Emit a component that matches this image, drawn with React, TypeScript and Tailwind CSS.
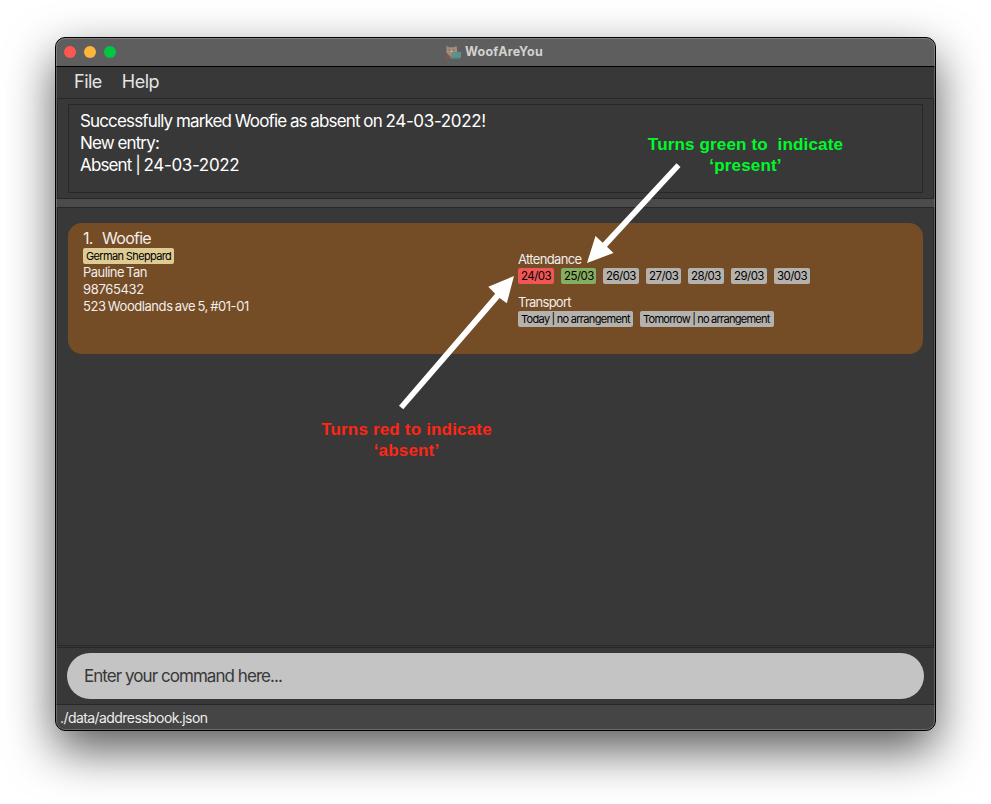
import React from "react";

const dates = [
  { label: "24/03", width: "w-9", color: "bg-[#f05654]" },
  { label: "25/03", width: "w-[35px]", color: "bg-[#86ae60]" },
  { label: "26/03", width: "w-9", color: "bg-[#b5b2ae]" },
  { label: "27/03", width: "w-[35px]", color: "bg-[#b5b2ae]" },
  { label: "28/03", width: "w-9", color: "bg-[#b5b2ae]" },
  { label: "29/03", width: "w-9", color: "bg-[#b5b2ae]" },
  { label: "30/03", width: "w-9", color: "bg-[#b5b2ae]" },
];

function CatIcon() {
  return (
    <svg width="17" height="15" viewBox="0 0 17 15" className="mr-[3px] shrink-0">
      <path d="M1.500 .8L4 2.200h5L11.500 .8l.8 5.500L10 9.500H3L1.300 7z" fill="#a58c78" />
      <path d="M3 7h7.500v6H3z" fill="#a58a74" />
      <path d="M3.800 4.500h1.200v1H3.800zM8 4.500h1.200v1H8z" fill="#5d524c" />
      <path d="M5.300 5.800h2.200V7H5.300z" fill="#c9b7a6" />
      <path d="M.5 11l3-1.500L6 12v1.500H1.500z" fill="#8c5151" />
      <path d="M6.500 7.500L16 6.800v5.700L14.500 13.500h-8z" fill="#5c918c" />
      <path d="M5 12.300h10V13.500H5z" fill="#4f8580" />
    </svg>
  );
}

function TitleBar() {
  return (
    <div className="relative flex h-[29px] shrink-0 items-center justify-center border-b border-black bg-[#5e5e5e] pr-[3px]">
      <div className="absolute left-2 top-2 flex gap-2">
        <span className="size-3 rounded-full bg-[#ff5650]" />
        <span className="size-3 rounded-full bg-[#ffb43a]" />
        <span className="size-3 rounded-full bg-[#00c742]" />
      </div>
      <CatIcon />
      <span className="text-[12.5px] font-bold leading-none tracking-[0.25px] text-[#d2d2d2]">WoofAreYou</span>
    </div>
  );
}

function Card() {
  return (
    <div className="flex h-[131px] rounded-[14px] bg-[#744c26] text-[#f2eeea]">
      <div className="flex w-[450px] flex-col items-start pl-[15px] pt-[6px]">
        <div className="h-[19px] whitespace-pre text-[16px] leading-[18px] tracking-[-0.75px] [word-spacing:1px]">1.  Woofie</div>
        <div className="h-4 w-[91px] whitespace-nowrap rounded-[2px] bg-[#dfcb94] pl-[3px] text-[11px] leading-4 tracking-[-0.64px] text-black">
          German Sheppard
        </div>
        <div className="text-[13px] leading-[17px] tracking-[-0.55px] [word-spacing:-1px]">Pauline Tan</div>
        <div className="text-[13px] leading-[17px] tracking-[-0.35px]">98765432</div>
        <div className="text-[13px] leading-[17px] tracking-[-0.43px] [word-spacing:-1px]">523 Woodlands ave 5, #01-01</div>
      </div>
      <div className="flex flex-col pt-7">
        <div className="text-[13px] leading-[17px] tracking-[-0.65px]">Attendance</div>
        <div className="flex gap-[7px]">
          {dates.map((d) => (
            <span
              key={d.label}
              className={`h-4 rounded-[2px] pl-[3px] text-[11.5px] leading-4 tracking-[-0.55px] text-black ${d.width} ${d.color}`}
            >
              {d.label}
            </span>
          ))}
        </div>
        <div className="mt-[10px] text-[13px] leading-[17px] tracking-[-0.75px]">Transport</div>
        <div className="flex gap-[7px] text-[11px] leading-4 text-black [word-spacing:-0.3px]">
          <span className="h-4 w-[115px] whitespace-nowrap rounded-[2px] bg-[#b5b2ae] pl-[3px] tracking-[-0.66px]">
            Today | no arrangement
          </span>
          <span className="h-4 w-[134px] whitespace-nowrap rounded-[2px] bg-[#b5b2ae] pl-[3px] tracking-[-0.71px]">
            Tomorrow | no arrangement
          </span>
        </div>
      </div>
    </div>
  );
}

function Annotations() {
  return (
    <>
      <svg className="pointer-events-none absolute left-0 top-0" width="991" height="804" viewBox="0 0 991 804" fill="#fff">
        <path d="M676.500 163.300L680.500 167L607 246.700L613.500 253L587 263L595.500 236L602.700 242.800z" />
        <path d="M399 405.700L403.300 409.300L499.600 298L506.800 303.300L514 276L488.300 286.700L495.200 293.800z" />
      </svg>
      <div className="absolute left-[640px] top-[134px] w-[211px] whitespace-pre text-center font-['Liberation_Sans',Arial,sans-serif] text-[17px] font-bold leading-[21px] tracking-[0.16px] text-[#00f92b]">
        {"Turns green to  indicate\n‘present’"}
      </div>
      <div className="absolute left-[301px] top-[419px] w-[211px] whitespace-pre text-center font-['Liberation_Sans',Arial,sans-serif] text-[17px] font-bold leading-[21px] tracking-[0.18px] text-[#ff2616]">
        {"Turns red to indicate\n‘absent’"}
      </div>
    </>
  );
}

export default function App() {
  return (
    <div className="relative h-[804px] w-[991px] overflow-hidden bg-white pl-[55px] pt-[37px] font-['Inter',sans-serif]">
      <div className="h-[694px] w-[881px] rounded-[10px] shadow-[0_19px_48px_rgba(0,0,0,0.65)]">
        <div className="relative flex h-full flex-col overflow-hidden rounded-[10px] border border-black bg-[#383838]">
          <TitleBar />
          <div className="flex h-[31px] shrink-0 gap-5 pl-[18px] text-[18px] leading-[30px] tracking-[-0.5px] text-[#e4e4e4]">
            <span>File</span>
            <span>Help</span>
          </div>
          <div className="mx-px h-[101px] shrink-0 border border-[#282828] px-[10px] py-[5px]">
            <div className="h-[89px] border border-[#282828] pl-[11px] pt-[5px] text-[17px] leading-[22px] tracking-[-0.85px] text-white [word-spacing:-0.3px]">
              <div>
                Successfully marked Woofie as absent on <span className="tracking-[-0.35px]">24-03-2022!</span>
              </div>
              <div>New entry:</div>
              <div>
                Absent | <span className="tracking-[-0.35px]">24-03-2022</span>
              </div>
            </div>
          </div>
          <div className="h-2 shrink-0 bg-[#4b4b4b]" />
          <div className="mx-px mb-px h-[439px] shrink-0 border border-[#282828] px-[10px] pt-[15px]">
            <Card />
          </div>
          <div className="h-[57px] shrink-0 border-t border-[#282828] px-[11px] pt-[5px]">
            <div className="h-[46px] rounded-full bg-[#c4c4c4] pl-[17px] text-[17px] leading-[46px] tracking-[-0.95px] text-[#383838]">
              Enter your command here...
            </div>
          </div>
          <div className="h-[26px] shrink-0 border-t border-[#282828] bg-[#454545] pl-1 text-[14px] leading-[25px] tracking-[-0.57px] text-[#eeeeee]">
            ./data/addressbook.json
          </div>
          <div className="pointer-events-none absolute inset-0 rounded-[9px] border border-white/20" />
        </div>
      </div>
      <Annotations />
    </div>
  );
}
